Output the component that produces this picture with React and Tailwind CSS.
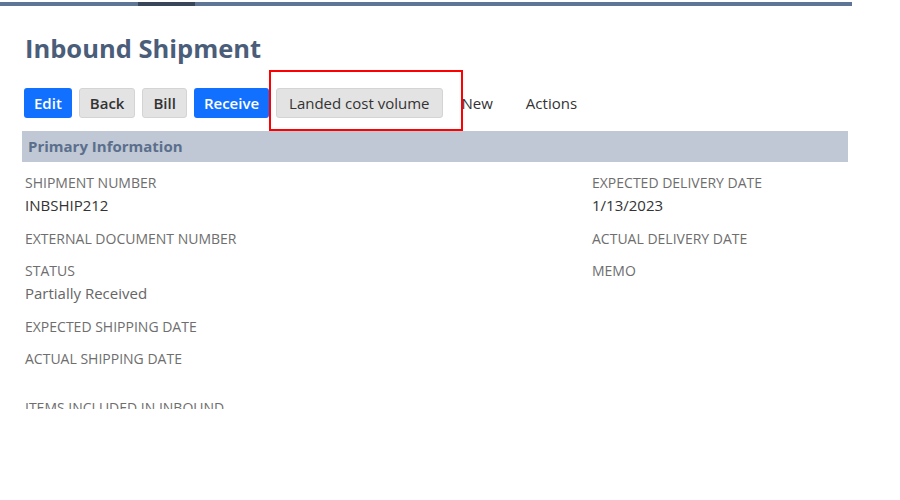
import React from 'react';

const leftFields = [
  { label: 'Shipment Number', value: 'INBSHIP212' },
  { label: 'External Document Number' },
  { label: 'Status', value: 'Partially Received', muted: true },
  { label: 'Expected Shipping Date' },
  { label: 'Actual Shipping Date' },
];

const rightFields = [
  { label: 'Expected Delivery Date', value: '1/13/2023' },
  { label: 'Actual Delivery Date' },
  { label: 'Memo' },
];

const Field = ({ label, value, muted }) => (
  <div className="mb-[13px]">
    <div className="h-[19px] text-[14px] leading-[19px] uppercase text-[#6e6e6e]">{label}</div>
    {value && (
      <div className={`mt-[3px] h-[21px] text-[15px] leading-[21px] ${muted ? 'text-[#666]' : 'text-[#333]'}`}>{value}</div>
    )}
  </div>
);

const App = () => {
  return (
    <div className="w-[900px] h-[500px] bg-white overflow-hidden" style={{ fontFamily: '"Open Sans", "Noto Sans", sans-serif' }}>
      <div className="h-[409px] overflow-hidden">
        {/* top nav strip */}
        <div className="pt-[2px]">
          <div className="w-[852px] h-1 bg-[#5f7595] flex">
            <div className="ml-[138px] w-[57px] h-1 bg-[#39465a]" />
          </div>
        </div>

        <h1 className="mt-[26px] ml-[25px] h-8 text-[25.5px] leading-8 font-bold text-[#4a5d79]">Inbound Shipment</h1>

        {/* toolbar */}
        <div className="relative mt-6 ml-6 flex items-center gap-[7px] text-[15px]">
          <button className="h-[30px] px-[10px] rounded-[3px] bg-[#1170ff] text-white font-semibold">Edit</button>
          <button className="h-[30px] px-[10px] rounded-[3px] bg-[#e3e3e3] border border-[#d4d4d4] text-[#333] font-semibold">Back</button>
          <button className="h-[30px] px-[10px] rounded-[3px] bg-[#e3e3e3] border border-[#d4d4d4] text-[#333] font-semibold">Bill</button>
          <button className="h-[30px] px-[10px] rounded-[3px] bg-[#1170ff] text-white font-semibold">Receive</button>
          <button className="h-[30px] px-[12px] rounded-[3px] bg-[#e3e3e3] border border-[#d4d4d4] text-[#333]">Landed cost volume</button>
          <button className="h-[30px] pl-[12px] pr-[16px] text-[#333] font-medium">New</button>
          <button className="h-[30px] px-[10px] text-[#333] font-medium">Actions</button>
          <div className="absolute left-[245px] top-[-18px] w-[194px] h-[61px] border-2 border-[#ff0000] pointer-events-none" />
        </div>

        {/* section header */}
        <div className="mt-[13px] ml-[22px] w-[826px] h-[31px] bg-[#bfc8d4] flex items-center px-[6px]">
          <span className="text-[15px] font-bold text-[#5b6f8d]">Primary Information</span>
        </div>

        <div className="mt-[11px] ml-[25px] flex">
          <div className="w-[567px]">
            {leftFields.map((f) => (
              <Field key={f.label} {...f} />
            ))}
            <div className="mt-[30px] text-[14px] leading-[19px] uppercase text-[#6e6e6e]">Items Included in Inbound</div>
          </div>
          <div>
            {rightFields.map((f) => (
              <Field key={f.label} {...f} />
            ))}
          </div>
        </div>
      </div>
    </div>
  );
};

export default App;
